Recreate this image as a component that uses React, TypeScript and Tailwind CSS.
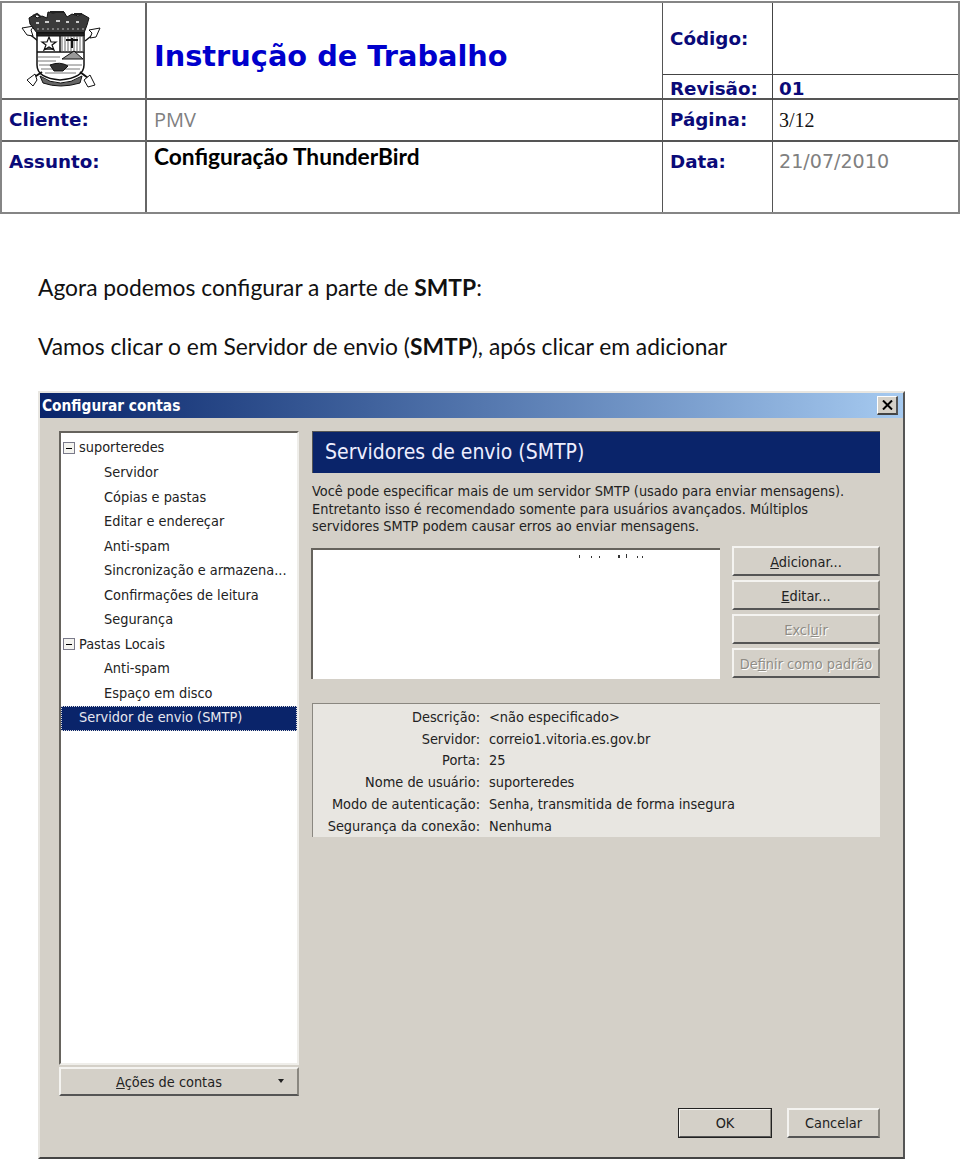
const treeItems = [
  { label: "suporteredes", level: 0, expander: true },
  { label: "Servidor", level: 1 },
  { label: "Cópias e pastas", level: 1 },
  { label: "Editar e endereçar", level: 1 },
  { label: "Anti-spam", level: 1 },
  { label: "Sincronização e armazena...", level: 1 },
  { label: "Confirmações de leitura", level: 1 },
  { label: "Segurança", level: 1 },
  { label: "Pastas Locais", level: 0, expander: true },
  { label: "Anti-spam", level: 1 },
  { label: "Espaço em disco", level: 1 },
  { label: "Servidor de envio (SMTP)", level: 0, selected: true },
];

const details = [
  ["Descrição:", "<não especificado>"],
  ["Servidor:", "correio1.vitoria.es.gov.br"],
  ["Porta:", "25"],
  ["Nome de usuário:", "suporteredes"],
  ["Modo de autenticação:", "Senha, transmitida de forma insegura"],
  ["Segurança da conexão:", "Nenhuma"],
];

// coordinates of the drawing are the page's own, hence the viewBox origin
function CityCrest() {
  return (
    <svg width="84" height="78" viewBox="20 10 84 78" fill="none" stroke="#111" strokeWidth="1">
      {/* arrows on top */}
      <path d="M38 41 L27 32" strokeWidth="1.5" />
      <path d="M22 28 L34 26 L31 30 L33 36 L27 35 Z" fill="#fff" />
      <path d="M85 41 L95 33" strokeWidth="1.5" />
      <path d="M100 28 L89 30 L92 33 L90 38 L96 37 Z" fill="#fff" />
      {/* crown */}
      <path d="M37 33 L30 24 L29 18 L34 15 L37 18 L42 16 L47 18 L48 12 L53 13 L59 12 L64 12 L67 17 L72 14 L78 16 L82 14 L89 18 L87 25 L84 33 Z" fill="#3a3a3a" />
      <path d="M33 16 L37 14 L41 17 M50 12 H64 M74 14 L82 14" stroke="#222" strokeWidth="2" />
      <path d="M36 23 h3 M45 22 h4 M56 21 h4 M66 22 h3 M76 22 h3" stroke="#ccc" strokeWidth="2" />
      <path d="M37 29 h47" stroke="#bbb" strokeWidth="1" strokeDasharray="2 3" />
      {/* shield */}
      <path d="M37 33 H84 V65 Q84 78 60 80 Q37 78 37 65 Z" fill="#fff" strokeWidth="1.5" />
      <path d="M37 33 H84 V36 H37 Z" fill="#222" />
      <path d="M60 36 V52 M37 52 H84" strokeWidth="1.5" />
      <path d="M49 37 L51 42 L56 42 L52 45 L54 50 L49 47 L44 50 L46 45 L42 42 L47 42 Z" fill="#fff" strokeWidth="1.2" />
      <path d="M44 49 H54" strokeWidth="1.5" />
      <path d="M62 36v16M65 36v16M68 36v16M71 36v16M74 36v16M77 36v16M80 36v16M83 36v16" stroke="#666" />
      <path d="M66 40 h12 M72 38 v10" strokeWidth="2" />
      {/* landscape */}
      <path d="M38 57 H60 M38 61 H56 M39 65 H82 M41 69 H80 M45 73 H76" stroke="#777" />
      <path d="M62 59 L74 51 L83 59 Z" fill="#999" />
      <path d="M50 65 Q60 61 68 66 L63 71 H54 Z" fill="#333" />
      {/* arrows and ribbon at the bottom */}
      <path d="M42 72 L30 80 M80 72 L92 81" strokeWidth="2" />
      <path d="M27 80 L35 74 L37 80 L33 86 Z" fill="#fff" />
      <path d="M95 85 L88 87 L84 80 L90 75 Z" fill="#fff" />
      <path d="M40 76 Q60 90 82 76 L80 83 Q60 89 43 83 Z" fill="#666" />
    </svg>
  );
}

function Win2kButton({
  children,
  disabled,
  className = "",
}: {
  children: React.ReactNode;
  disabled?: boolean;
  className?: string;
}) {
  return (
    <div
      className={`flex items-center justify-center bg-[#d4d0c8] border-t-2 border-l-2 border-t-[#f4f3f0] border-l-[#f4f3f0] border-b-2 border-r-2 border-b-[#555] border-r-[#8a8780] ${
        disabled
          ? "text-[#8f8c85] [text-shadow:1px_1px_0_#fff]"
          : "text-[#222]"
      } ${className}`}
    >
      {children}
    </div>
  );
}

function Underlined({ letter, rest, before = "" }: { letter: string; rest: string; before?: string }) {
  return (
    <span>
      {before}
      <span className="underline">{letter}</span>
      {rest}
    </span>
  );
}

export default function App() {
  return (
    <div className="w-[960px] h-[1160px] bg-white overflow-hidden pt-px">
      {/* document header */}
      <div className="grid grid-cols-[145px_516px_110px_185px] grid-rows-[97px_42px_70px] border-2 border-[#858585] font-['DejaVu_Sans',sans-serif] font-bold text-[#0a0a78] text-[18.3px]">
        <div className="border-r-2 border-b-2 border-[#666] pl-[18px] pt-[7px]">
          <CityCrest />
        </div>
        <div className="border-r border-b-2 border-[#555] flex items-center pl-[7px] pt-[13px] text-[28.8px] text-[#0000cc]">
          Instrução de Trabalho
        </div>
        <div className="col-span-2 border-b-2 border-[#555] grid grid-cols-[110px_1fr] grid-rows-[72px_1fr]">
          <div className="border-r border-b border-[#444] flex items-center pl-[7px]">Código:</div>
          <div className="border-b border-[#444]" />
          <div className="border-r border-[#444] flex items-center pl-[7px]">Revisão:</div>
          <div className="flex items-center pl-[6px]">01</div>
        </div>

        <div className="border-r-2 border-b-2 border-[#666] flex items-center pl-[7px]">Cliente:</div>
        <div className="border-r border-b-2 border-[#555] flex items-center pl-[7px] font-normal text-[#808080] text-[20px] font-['Open_Sans',sans-serif]">
          PMV
        </div>
        <div className="border-r border-b-2 border-[#555] flex items-center pl-[7px]">Página:</div>
        <div className="border-b-2 border-[#555] flex items-center pl-[6px] font-normal text-[#111] font-['Liberation_Serif',serif] text-[20px]">
          3/12
        </div>

        <div className="border-r-2 border-[#666] pl-[7px] pt-[6px]">Assunto:</div>
        <div className="border-r border-[#555] pl-[7px] text-[#000] text-[22.7px] leading-[30px] font-['Lato',sans-serif] font-bold">
          Configuração ThunderBird
        </div>
        <div className="border-r border-[#555] pl-[7px] pt-[6px]">Data:</div>
        <div className="pl-[6px] pt-[6px] font-normal text-[#808080] text-[19.1px]">21/07/2010</div>
      </div>

      {/* instructions */}
      <div className="pl-[38px] pt-[58px] font-['Lato',sans-serif] text-[22.8px] leading-[30px] text-[#111]">
        <p>
          Agora podemos configurar a parte de <b>SMTP</b>:
        </p>
        <p className="mt-[29px]">
          Vamos clicar o em Servidor de envio (<b>SMTP</b>), após clicar em adicionar
        </p>
      </div>

      {/* screenshot of the dialog */}
      <div className="ml-[38px] mt-[30px] w-[867px] h-[768px] bg-[#d4d0c8] border-t-2 border-l-2 border-t-[#e8e6e1] border-l-[#e8e6e1] border-r-2 border-b-2 border-r-[#555] border-b-[#444] flex flex-col font-['DejaVu_Sans_Condensed','DejaVu_Sans',sans-serif] text-[14.4px] text-[#222]">
        <div className="h-[25px] shrink-0 bg-gradient-to-r from-[#0a246a] to-[#a6caf0] flex items-center justify-between pl-[2px] pr-[5px] text-white font-bold text-[15.3px]">
          <span className="pt-[2px]">Configurar contas</span>
          <div className="w-[21px] h-[19px] bg-[#d4d0c8] border-t border-l border-t-white border-l-white border-r-2 border-b-2 border-r-[#555] border-b-[#444] flex items-center justify-center">
            <svg width="11" height="10" viewBox="0 0 11 10" stroke="#000" strokeWidth="2">
              <path d="M1 0.5 L10 9.5 M10 0.5 L1 9.5" />
            </svg>
          </div>
        </div>

        <div className="flex-1 flex pl-[19px] pr-[23px] pt-[13px]">
          {/* left column */}
          <div className="w-[240px] shrink-0 flex flex-col">
            <div className="h-[634px] bg-white border-t-2 border-l-2 border-t-[#66635d] border-l-[#66635d] border-r-2 border-b-2 border-r-[#efeeea] border-b-[#efeeea] pt-[3px]">
              {treeItems.map((item, i) => (
                <div
                  key={i}
                  className={`h-[24.55px] flex items-center ${
                    item.selected
                      ? "bg-[#0a246a] text-[#e8e8f0] outline-1 outline-dotted outline-offset-[-1px] outline-[#e0e0e0]"
                      : ""
                  } ${item.level === 1 ? "pl-[43px]" : "pl-[18px]"} relative`}
                >
                  {item.expander && (
                    <span className="absolute left-[2px] top-[6px] w-[12px] h-[12px] border border-[#7a7a8a] bg-[#f4f4f0] flex items-center justify-center">
                      <span className="w-[6px] h-px bg-black" />
                    </span>
                  )}
                  {item.label}
                </div>
              ))}
            </div>
            <Win2kButton className="mt-[2px] h-[29px] pt-[2px] relative">
              <span className="mr-[20px]">
                <Underlined letter="A" rest="ções de contas" />
              </span>
              <span className="absolute right-[13px] top-[10px] w-0 h-0 border-l-[3px] border-r-[3px] border-t-[4px] border-l-transparent border-r-transparent border-t-[#222]" />
            </Win2kButton>
          </div>

          {/* right column */}
          <div className="ml-[13px] flex-1 flex flex-col">
            <div className="h-[42px] bg-[#0a246a] border-t border-l border-[#555] border-r-0 flex items-center pl-[12px] text-[#eef] text-[21px]">
              Servidores de envio (SMTP)
            </div>
            <div className="mt-[10px] leading-[17.6px]">
              <p>Você pode especificar mais de um servidor SMTP (usado para enviar mensagens).</p>
              <p>Entretanto isso é recomendado somente para usuários avançados. Múltiplos</p>
              <p>servidores SMTP podem causar erros ao enviar mensagens.</p>
            </div>
            <div className="mt-[10px] flex items-start">
              <div className="relative w-[409px] h-[131px] -ml-px mt-[2px] bg-white border-t-2 border-l-2 border-t-[#66635d] border-l-[#66635d]">
                <svg className="absolute left-[266px] top-[3px]" width="80" height="6" viewBox="0 0 80 6" fill="#333">
                  <rect x="0" y="2" width="1" height="3" />
                  <rect x="12" y="3" width="1" height="2" />
                  <rect x="20" y="3" width="1" height="2" />
                  <rect x="39" y="2" width="2" height="3" />
                  <rect x="47" y="1" width="1" height="4" />
                  <rect x="58" y="3" width="1" height="2" />
                  <rect x="63" y="3" width="1" height="2" />
                </svg>
              </div>
              <div className="ml-[12px] flex-1 flex flex-col gap-[4px]">
                <Win2kButton className="h-[30px] pt-[4px]">
                  <Underlined letter="A" rest="dicionar..." />
                </Win2kButton>
                <Win2kButton className="h-[30px] pt-[4px]">
                  <Underlined letter="E" rest="ditar..." />
                </Win2kButton>
                <Win2kButton className="h-[30px] pt-[4px]" disabled>
                  <Underlined before="Excl" letter="u" rest="ir" />
                </Win2kButton>
                <Win2kButton className="h-[30px] pt-[4px]" disabled>
                  <Underlined before="De" letter="f" rest="inir como padrão" />
                </Win2kButton>
              </div>
            </div>
            <div className="mt-[24px] h-[134px] bg-[#e8e6e1] border-t border-l border-[#8a8780] border-r-0 pt-[3px]">
              {details.map(([label, value]) => (
                <div key={label} className="h-[21.8px] flex items-center">
                  <span className="w-[167px] text-right">{label}</span>
                  <span className="ml-[9px]">{value}</span>
                </div>
              ))}
            </div>
            <div className="mt-auto mb-[19px] flex justify-end gap-[15px]">
              <Win2kButton className="w-[94px] h-[30px] pt-[2px] outline-1 outline-[#222] outline-offset-[-1px]">OK</Win2kButton>
              <Win2kButton className="w-[93px] h-[30px] pt-[2px]">Cancelar</Win2kButton>
            </div>
          </div>
        </div>
      </div>
    </div>
  );
}
